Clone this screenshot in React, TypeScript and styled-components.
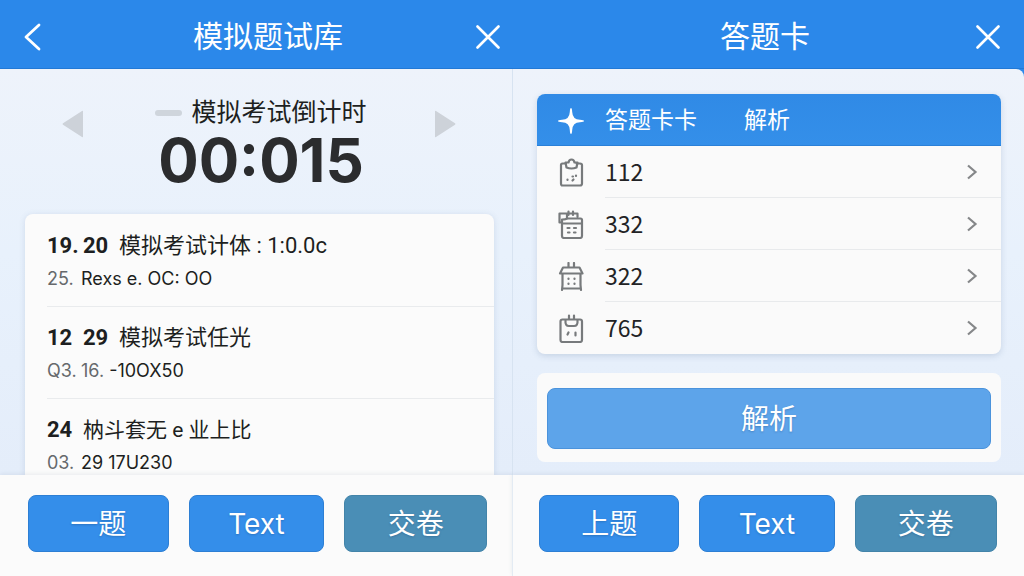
import React from 'react';
import styled, { createGlobalStyle, css } from 'styled-components';

const Global = createGlobalStyle`
  * { box-sizing: border-box; }
  html, body { margin: 0; padding: 0; }
  body {
    background: #fbfbfb;
    color: #1d1f21;
    font-family: Roboto, "Noto Sans CJK SC", sans-serif;
  }
  button { font: inherit; border: 0; padding: 0; margin: 0; cursor: pointer; }
  h1, h2, h3, p, ul, ol { margin: 0; padding: 0; font-weight: 400; }
  ul, ol { list-style: none; }
`;

const Page = styled.div`
  display: grid;
  grid-template-columns: 1fr 1fr;
  min-height: 100vh;
`;

const Panel = styled.section`
  display: flex;
  flex-direction: column;
  min-width: 0;
  background: #2b88ea;
`;

const Header = styled.header<{ $back?: boolean }>`
  display: grid;
  grid-template-columns: 36px 1fr 24px;
  align-items: center;
  height: 69px;
  padding: ${(p) => (p.$back ? '6px 12px 0 24px' : '6px 24px 0 6px')};
  color: #fff;
  background: #2b88ea;
  border-bottom: 1px solid #2279d6;
`;

const Title = styled.h1`
  grid-column: 2;
  font-size: 30px;
  line-height: 40px;
  text-align: center;
  white-space: nowrap;
`;

const IconButton = styled.button`
  display: flex;
  align-items: center;
  height: 40px;
  color: inherit;
  background: none;
`;

const Body = styled.main<{ $side: 'left' | 'right' }>`
  flex: 1;
  display: flex;
  flex-direction: column;
  background: linear-gradient(#eef3fb, #e8f1fc 45%, #e4edfa);
  ${(p) =>
    p.$side === 'left'
      ? css`padding: 28px 18px 0 25px;`
      : css`
          padding: 25px 23px 13px 24px;
          gap: 19px;
          border-left: 1px solid #d7e3f1;
          border-top-right-radius: 8px;
        `}
`;

const Timer = styled.div`
  display: flex;
  justify-content: space-between;
  padding: 0 38px 0 37px;
  height: 117px;
`;

const Arrow = styled.button`
  display: flex;
  align-self: flex-start;
  padding-top: 13px;
  background: none;
`;

const Countdown = styled.div`
  display: flex;
  flex-direction: column;
  align-items: center;
  padding-left: 4px;
`;

const CountLabel = styled.h2`
  display: flex;
  align-items: center;
  gap: 9px;
  font-size: 25px;
  line-height: 32px;
  white-space: nowrap;
`;

const Dash = styled.span`
  width: 27px;
  height: 6px;
  border-radius: 3px;
  background: #cfd5dc;
`;

const Clock = styled.div`
  font-family: Inter, sans-serif;
  font-size: 60px;
  font-weight: 700;
  line-height: 62px;
  color: #2b2c2e;
`;

const ExamCard = styled.ul`
  flex: 1;
  padding: 1px 0 0 22px;
  border-radius: 8px 8px 0 0;
  background: #fbfbfb;
  box-shadow: 0 1px 6px rgba(70, 100, 140, 0.16);
`;

const ExamRow = styled.li`
  display: flex;
  flex-direction: column;
  gap: 7px;
  padding: 16px 0;
  border-bottom: 1px solid #e9ebed;
  &:last-child { border-bottom: 0; padding-bottom: 0; }
`;

const ExamTitle = styled.h3<{ $compact?: boolean }>`
  display: flex;
  font-size: ${(p) => (p.$compact ? 21 : 22)}px;
  line-height: 30px;
  white-space: nowrap;
`;

const Num = styled.b`
  width: 36px;
  font-size: 22px;
  font-weight: 700;
`;

const ExamInfo = styled.p`
  display: flex;
  font-family: Inter, "Noto Sans CJK SC", sans-serif;
  font-size: 18px;
  line-height: 22px;
  white-space: nowrap;
`;

const InfoNo = styled.span`
  width: 34px;
  color: #66696c;
`;

const Soft = styled.span`
  color: #66696c;
`;

const AnswerCard = styled.div`
  border-radius: 8px;
  background: #fafafa;
  box-shadow: 0 2px 6px rgba(70, 100, 140, 0.2);
`;

const AnswerHead = styled.div`
  display: grid;
  grid-template-columns: 68px 139px 1fr;
  align-items: center;
  height: 52px;
  padding-top: 3px;
  border-radius: 8px 8px 0 0;
  background: linear-gradient(#308ae6, #348fe9);
  border-bottom: 1px solid #2a80d8;
  color: #fff;
  font-size: 23px;
  line-height: 32px;
`;

const Cell = styled.span`
  display: flex;
  padding-left: 21px;
`;

const AnswerRow = styled.li`
  display: grid;
  grid-template-columns: 68px 1fr;
  &:last-child > button { border-bottom: 0; }
`;

const RowIcon = styled.span`
  display: flex;
  align-items: center;
  padding-left: 21px;
`;

const RowLink = styled.button`
  display: flex;
  align-items: center;
  justify-content: space-between;
  height: 52px;
  padding-right: 23px;
  border-bottom: 1px solid #e8eaec;
  background: none;
  color: #222325;
  font-family: "Noto Sans CJK SC", sans-serif;
  font-size: 23px;
  line-height: 32px;
`;

const RowNo = styled.span`
  padding-bottom: 2px;
`;

const ActionCard = styled.div`
  padding: 15px 10px 13px;
  border-radius: 8px;
  background: #fafafa;
`;

const Button = styled.button<{ $tone: 'blue' | 'teal' | 'light' }>`
  width: 100%;
  height: ${(p) => (p.$tone === 'light' ? 61 : 57)}px;
  border-radius: 8px;
  color: #fff;
  font-family: Inter, "Noto Sans CJK SC", sans-serif;
  font-size: 28px;
  line-height: 36px;
  text-shadow: 0 1px 2px rgba(20, 60, 110, 0.3);
  ${(p) =>
    ({
      blue: css`background: #348eea; border: 1px solid #2d7fd4;`,
      teal: css`background: #4a8eb6; border: 1px solid #4384a9;`,
      light: css`background: #5da4ea; border: 1px solid #4b93dc;`,
    })[p.$tone]}
`;

const Footer = styled.footer<{ $divided?: boolean }>`
  display: grid;
  grid-template-columns: 141fr 136fr 143fr;
  gap: 20px;
  height: 101px;
  padding: 20px 25px 24px 28px;
  background: #fbfbfb;
  box-shadow: 0 -1px 4px rgba(70, 90, 120, 0.1);
  ${(p) => p.$divided && css`padding: 20px 27px 24px 26px; border-left: 1px solid #e3ebf3;`}
`;

const Close = () => (
  <IconButton aria-label="关闭">
    <svg width="24" height="24" viewBox="0 0 24 24" fill="none" stroke="currentColor" strokeWidth="2.6" strokeLinecap="round">
      <path d="M1.500 1.500 22.500 22.500M22.500 1.500 1.500 22.500" />
    </svg>
  </IconButton>
);

const Triangle = ({ flip }: { flip?: boolean }) => (
  <svg width="22" height="28" viewBox="0 0 22 28" fill="#cdd2d9">
    {flip ? (
      <path d="M1 1.5Q1 .3 2 1L21 13.2Q22 14 21 14.8L2 27Q1 27.7 1 26.5Z" />
    ) : (
      <path d="M21 1.5Q21 .3 20 1L1 13.2Q0 14 1 14.8L20 27Q21 27.7 21 26.5Z" />
    )}
  </svg>
);

const glyphs = [
  <>
    <path d="M8 5.5H4.5Q3 5.5 3 7V25.5Q3 27.5 4.5 27.5H22Q24 27.5 24 25.5V7Q24 5.5 22 5.5H18.5" />
    <path d="M7.5 4.5H10.5Q11 1.5 13.5 1.5T16.5 4.5H19.5L18.5 9.5Q13.5 11.500 8.5 9.5Z" />
    <path d="M9.5 21.5v.5M14.5 22.5l1-1M18 17.5v.5M14.5 18.5h.5" />
  </>,
  <>
    <path d="M4 12.5H1.5V3.5H9V8.5M9 3.5H19.5V7M10.5 1.5V5M15 1.5V5" />
    <path d="M4 9.5Q8 9.5 9 8.5H22.5Q24 8.5 24 10V26Q24 28 22 28H6Q4 28 4 26ZM5 13.5H23" />
    <path d="M9.5 18h2M16 18h2M10 22.5h1.5M16 22.5h1.5" />
  </>,
  <>
    <path d="M10.5 1V5M16 1V5M5 5.5H21.5L24.5 11.5H2Z" />
    <path d="M4.500 12V23L4 28M22.5 12V23L23 28M4.5 26.5H22.5" />
    <path d="M10.5 16.5v.5M16.5 16.5v.5M10.5 21.5v.5M16.5 21.5v.5" />
  </>,
  <>
    <path d="M11 1.5V4.5M16 1.5V4.5M4.5 5.5H22Q24 5.5 24 7.5V26Q24 28 22 28H4.5Q2.5 28 2.5 26V7.5Q2.5 5.5 4.5 5.5Z" />
    <path d="M7.5 6.5Q7 12 11 12H16Q20 12 19.5 6.5" />
    <path d="M10.5 18.5 9.5 20.5M17.5 18.5V21.5" />
  </>,
];

const exams = [
  { nums: ['19.', '20'], title: '模拟考试计体 : 1:0.0c', no: '25.', soft: '', info: 'Rexs e. OC: OO' },
  { nums: ['12', '29'], title: '模拟考试任光', no: 'Q3.', soft: '16. ', info: '-10OX50' },
  { nums: ['24'], title: '枘斗套无 e 业上比', no: '03.', soft: '', info: '29 17U230' },
];

const answers = ['112', '332', '322', '765'];

const Actions = ({ first, divided }: { first: string; divided?: boolean }) => (
  <Footer $divided={divided}>
    <Button $tone="blue">{first}</Button>
    <Button $tone="blue">Text</Button>
    <Button $tone="teal">交卷</Button>
  </Footer>
);

export default function App() {
  return (
    <Page>
      <Global />
      <Panel>
        <Header $back>
          <IconButton aria-label="返回">
            <svg width="17" height="28" viewBox="0 0 17 28" fill="none" stroke="currentColor" strokeWidth="2.8" strokeLinecap="round" strokeLinejoin="round">
              <path d="M15 2 2 14 15 26" />
            </svg>
          </IconButton>
          <Title>模拟题试库</Title>
          <Close />
        </Header>
        <Body $side="left">
          <Timer>
            <Arrow aria-label="上一个"><Triangle /></Arrow>
            <Countdown>
              <CountLabel><Dash />模拟考试倒计时</CountLabel>
              <Clock>00:015</Clock>
            </Countdown>
            <Arrow aria-label="下一个"><Triangle flip /></Arrow>
          </Timer>
          <ExamCard>
            {exams.map((e) => (
              <ExamRow key={e.no}>
                <ExamTitle $compact={e.nums.length === 1}>
                  {e.nums.map((n) => <Num key={n}>{n}</Num>)}
                  <span>{e.title}</span>
                </ExamTitle>
                <ExamInfo>
                  <InfoNo>{e.no}</InfoNo>
                  <span>{e.soft && <Soft>{e.soft}</Soft>}{e.info}</span>
                </ExamInfo>
              </ExamRow>
            ))}
          </ExamCard>
        </Body>
        <Actions first="一题" />
      </Panel>
      <Panel>
        <Header>
          <Title>答题卡</Title>
          <Close />
        </Header>
        <Body $side="right">
          <AnswerCard>
            <AnswerHead>
              <Cell>
                <svg width="26" height="26" viewBox="0 0 26 26" fill="#fff">
                  <path d="M13 0Q14 0 14.2 4 14.5 11.5 22 11.8 26 12 26 13T22 14.2Q14.5 14.5 14.2 22 14 26 13 26T11.8 22Q11.5 14.5 4 14.2 0 14 0 13T4 11.8Q11.5 11.5 11.8 4 12 0 13 0Z" />
                </svg>
              </Cell>
              <span>答题卡卡</span>
              <span>解析</span>
            </AnswerHead>
            <ul>
              {answers.map((a, i) => (
                <AnswerRow key={a}>
                  <RowIcon>
                    <svg width="27" height="29" viewBox="0 0 27 29" fill="none" stroke="#777a7c" strokeWidth="2.2" strokeLinecap="round" strokeLinejoin="round">
                      {glyphs[i]}
                    </svg>
                  </RowIcon>
                  <RowLink>
                    <RowNo>{a}</RowNo>
                    <svg width="14" height="16" viewBox="0 0 14 16" fill="none" stroke="#858789" strokeWidth="2.2">
                      <path d="M4 1.5 11.5 8 4 14.5" />
                    </svg>
                  </RowLink>
                </AnswerRow>
              ))}
            </ul>
          </AnswerCard>
          <ActionCard>
            <Button $tone="light">解析</Button>
          </ActionCard>
        </Body>
        <Actions first="上题" divided />
      </Panel>
    </Page>
  );
}
